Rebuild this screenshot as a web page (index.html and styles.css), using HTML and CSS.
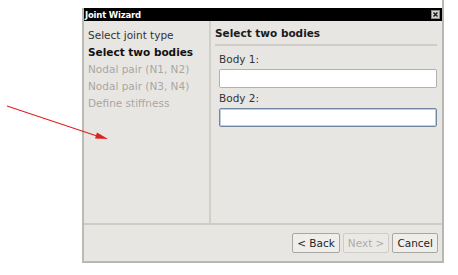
FILE: index.html
```html
<!DOCTYPE html>
<html>
<head>
<meta charset="utf-8">
<link rel="stylesheet" href="styles.css">
</head>
<body>
<div class="stage">
  <div class="frame">
    <div class="window">
      <div class="titlebar">
        <span class="title">Joint Wizard</span>
        <span class="close"><svg width="9" height="9" viewBox="0 0 9 9"><rect x="0.5" y="0.5" width="8" height="8" fill="#d8d6d2" stroke="#8a8a8a"/><path d="M2.5 2.5 L6.5 6.5 M6.5 2.5 L2.5 6.5" stroke="#222" stroke-width="1.6"/></svg></span>
      </div>
      <div class="main">
        <div class="steps">
          <div class="step">Select joint type</div>
          <div class="step current">Select two bodies</div>
          <div class="step disabled">Nodal pair (N1, N2)</div>
          <div class="step disabled">Nodal pair (N3, N4)</div>
          <div class="step disabled">Define stiffness</div>
        </div>
        <div class="page">
          <div class="page-title">Select two bodies</div>
          <div class="fields">
            <label class="field-label">Body 1:</label>
            <div class="input"></div>
            <label class="field-label">Body 2:</label>
            <div class="input focused"></div>
          </div>
        </div>
      </div>
      <div class="buttons">
        <button class="btn">&lt; Back</button>
        <button class="btn disabled">Next &gt;</button>
        <button class="btn">Cancel</button>
      </div>
    </div>
  </div>
  <svg class="arrow" width="120" height="60" viewBox="0 0 120 60">
    <line x1="7" y1="26" x2="100" y2="57" stroke="#e02020" stroke-width="1.3"/>
    <polygon points="108,59 97,52.5 95,58.5" fill="#e02020"/>
  </svg>
</div>
</body>
</html>
```

FILE: styles.css
```css
html, body {
  margin: 0;
  padding: 0;
  background: #ffffff;
}
body {
  font-family: "DejaVu Sans", sans-serif;
  width: 458px;
  height: 275px;
  overflow: hidden;
}
.stage {
  position: relative;
  width: 458px;
  height: 275px;
}
.frame {
  margin-left: 82px;
  width: 360px;
  padding-top: 8px;
  border-right: 2px solid #b9b7b3;
}
.window {
  background: #e8e6e2;
  border-left: 2px solid #bcbab6;
  border-bottom: 2px solid #b9b7b3;
  height: 253px;
  display: flex;
  flex-direction: column;
}
.titlebar {
  background: #000;
  height: 13px;
  display: flex;
  align-items: center;
  justify-content: space-between;
  padding: 0 2px 0 1px;
}
.title {
  color: #fff;
  font-weight: bold;
  font-size: 8.5px;
  letter-spacing: -0.2px;
}
.close {
  display: flex;
}
.close svg {
  display: block;
}
.main {
  display: flex;
  height: 202px;
  border-bottom: 2px solid #cfccc6;
}
.steps {
  width: 127px;
  border-right: 2px solid #d2cfc9;
  padding: 6px 0 0 4px;
  box-sizing: border-box;
}
.step {
  font-size: 10.5px;
  height: 17px;
  line-height: 17px;
  color: #333;
  white-space: nowrap;
}
.step.current {
  font-weight: bold;
  color: #111;
}
.step.disabled {
  color: #a9a7a4;
}
.page {
  flex: 1;
  padding: 4px 5px 0 4px;
}
.page-title {
  font-weight: bold;
  font-size: 10.5px;
  color: #1a1a1a;
  height: 19px;
  line-height: 17px;
  border-bottom: 2px solid #d0cdc8;
  margin-bottom: 5px;
}
.fields {
  padding: 0 0 0 4px;
  display: flex;
  flex-direction: column;
}
.field-label {
  font-size: 10.5px;
  color: #333;
  height: 16px;
  line-height: 16px;
  margin-bottom: 2px;
}
.input {
  height: 17px;
  background: #fff;
  border: 1px solid #b3b1ad;
  border-radius: 2px;
  margin-bottom: 2px;
}
.input.focused {
  border-color: #6f86a3;
  box-shadow: inset 0 0 0 1px #c2cfdf;
}
.buttons {
  flex: 1;
  display: flex;
  justify-content: flex-end;
  align-items: center;
  gap: 3px;
  padding: 0 4px 0 0;
}
.btn {
  font-family: "DejaVu Sans", sans-serif;
  font-size: 10.5px;
  height: 20px;
  padding: 0 4px;
  background: #f0eeeb;
  border: 1px solid #a9a7a3;
  border-radius: 2px;
  color: #1e1e1e;
}
.btn.disabled {
  color: #aeaca9;
  border-color: #cfcdc9;
  background: #ebe9e5;
}
.arrow {
  position: absolute;
  left: 0;
  top: 80px;
}
```
